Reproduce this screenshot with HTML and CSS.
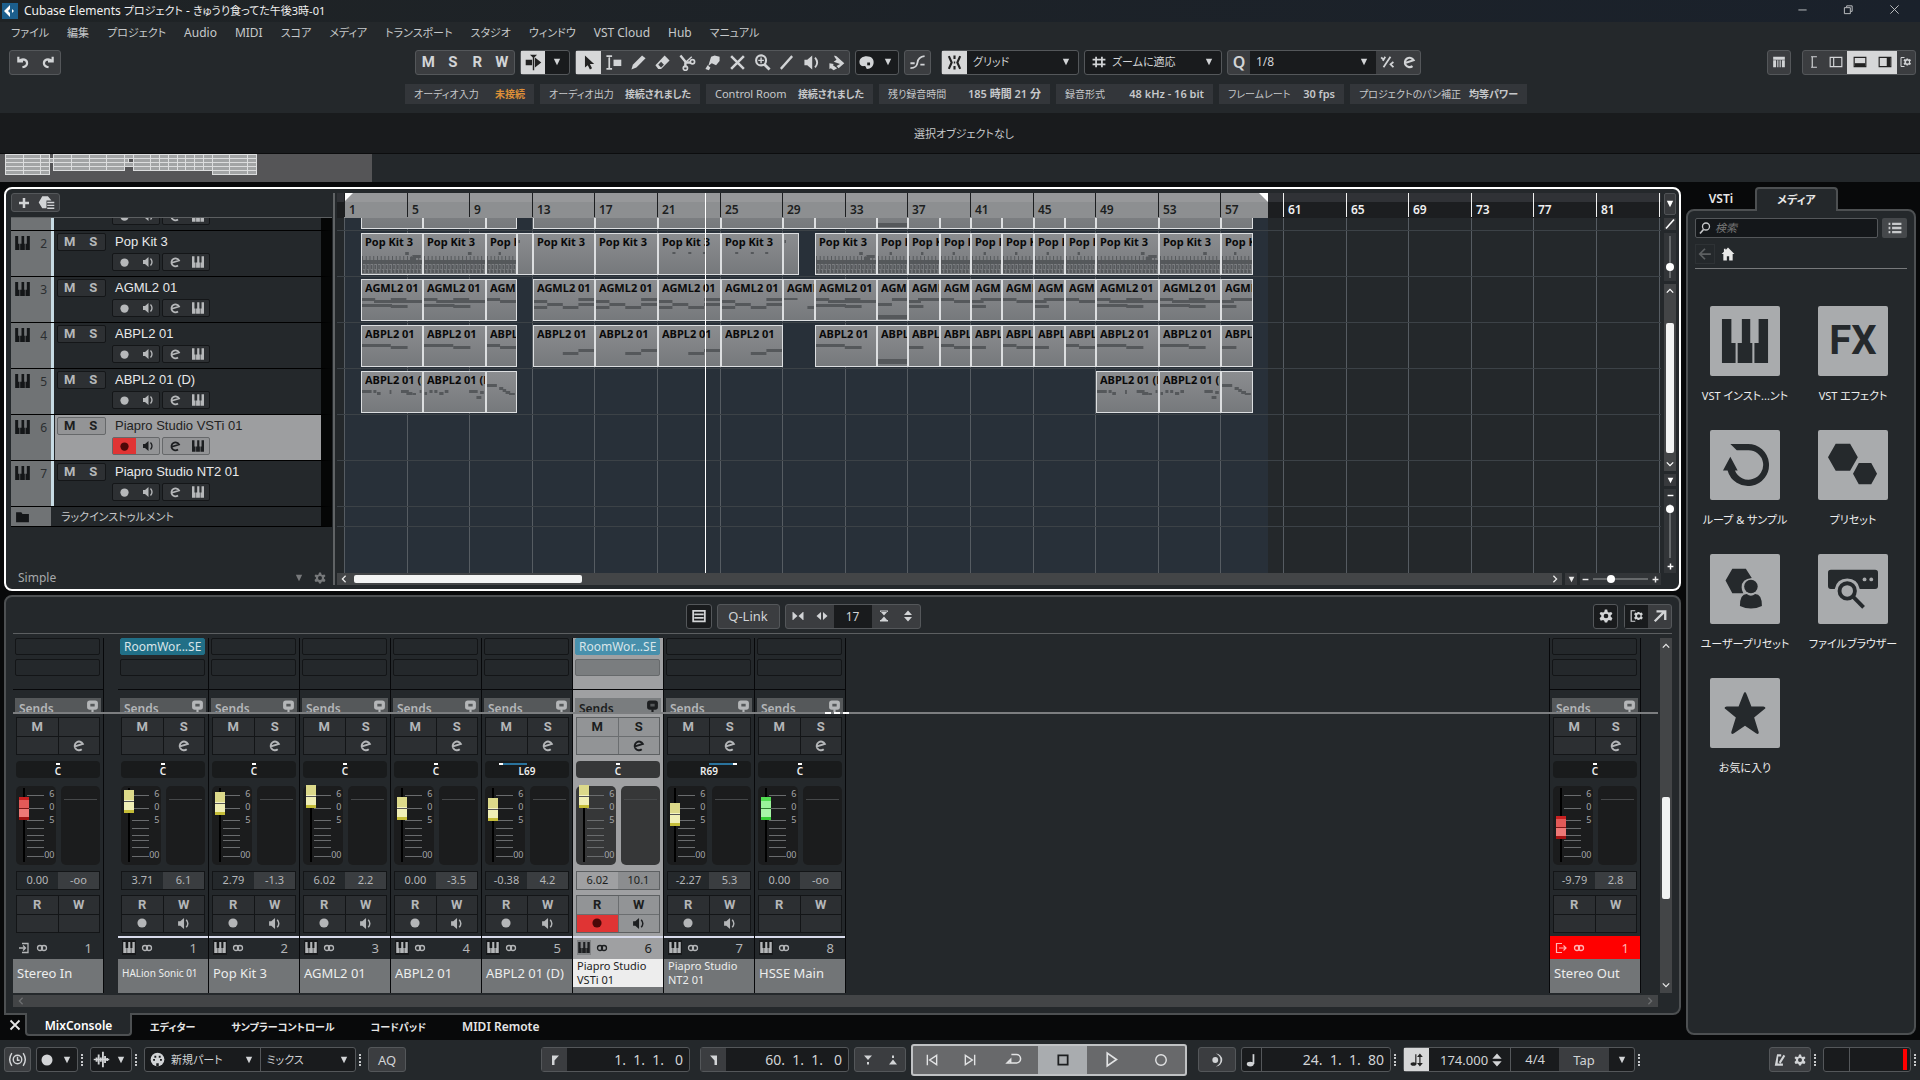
FILE: index.html
```html
<!DOCTYPE html>
<html lang="ja">
<head>
  <meta charset="UTF-8">
  <meta name="viewport" content="width=device-width, initial-scale=1.0">
  <title>Cubase Elements プロジェクト</title>
  <link rel="stylesheet" href="styles.css">
</head>
<body>

  <!-- icon sprite -->
  <svg class="sprite" aria-hidden="true">
    <symbol id="i-undo" viewBox="0 0 24 24"><path d="M4 3v8h8M5 10c7-5 14-2 14 4 0 4-3 6-8 7" fill="none" stroke="currentColor" stroke-width="3.800"/></symbol>
    <symbol id="i-redo" viewBox="0 0 24 24"><path d="M20 3v8h-8M19 10c-7-5-14-2-14 4 0 4 3 6 8 7" fill="none" stroke="currentColor" stroke-width="3.800"/></symbol>
    <symbol id="i-down" viewBox="0 0 10 10"><path d="M1 1h8L5 9z"/></symbol>
    <symbol id="i-autoscroll" viewBox="0 0 24 24"><path d="M1 8h9v8H1zM14 5l9 7-9 7zM7 1h10l-5 5zM11 3h2v20h-2z"/></symbol>
    <symbol id="i-arrow" viewBox="0 0 24 24"><path d="M7 2v17l4-3 3 6 3-2-3-6h6z"/></symbol>
    <symbol id="i-range" viewBox="0 0 24 24"><path d="M2 3h3l1 1 1-1h3M6 3v18M2 21h3l1-1 1 1h3" fill="none" stroke="currentColor" stroke-width="2.400"/><path d="M12 8h11v9H12z"/></symbol>
    <symbol id="i-pencil" viewBox="0 0 24 24"><path d="M2 22l2-7L17 2l5 4L9 19z"/></symbol>
    <symbol id="i-eraser" viewBox="0 0 24 24"><path d="M2 16L15 2l7 7L10 21H6z"/><path d="M6 15l4 4 4-4-4-4z" fill="#3b3d40"/></symbol>
    <symbol id="i-scissors" viewBox="0 0 24 24"><path d="M2 2l8 10M10 12h7M9 12v7" fill="none" stroke="currentColor" stroke-width="3.400"/><circle cx="19" cy="11" r="3" fill="none" stroke="currentColor" stroke-width="2.400"/><circle cx="9" cy="20" r="3" fill="none" stroke="currentColor" stroke-width="2.400"/><path d="M9 12l9-8" stroke="currentColor" stroke-width="2"/></symbol>
    <symbol id="i-glue" viewBox="0 0 24 24"><path d="M10 4l5-2 7 2v6l-5 6-6-3-5 4zM2 21l3-5 4 3-2 4z"/></symbol>
    <symbol id="i-cross" viewBox="0 0 24 24"><path d="M3 3l18 18M21 3L3 21" stroke="currentColor" stroke-width="3.600"/></symbol>
    <symbol id="i-zoom" viewBox="0 0 24 24"><circle cx="10" cy="9" r="7" fill="none" stroke="currentColor" stroke-width="3"/><path d="M6 9h8M10 5v8" stroke="currentColor" stroke-width="2"/><path d="M14 14l8 8" stroke="currentColor" stroke-width="4"/></symbol>
    <symbol id="i-line" viewBox="0 0 24 24"><path d="M4 21L20 3" stroke="currentColor" stroke-width="3.200"/></symbol>
    <symbol id="i-speaker" viewBox="0 0 24 24"><path d="M2 8h4l7-6v20l-7-6H2z"/><path d="M17 5q6 7 0 14" fill="none" stroke="currentColor" stroke-width="2.600"/></symbol>
    <symbol id="i-paint" viewBox="0 0 24 24"><path d="M9 2l3 1 11 10-8 7-3-3 5-3-9-3 4-3-3-4zM2 13l6 1-1 2 6 4-5 3-4-3-2 1z"/></symbol>
    <symbol id="i-palette" viewBox="0 0 24 24"><path d="M12 3c7 0 11 4 10 10s-6 8-9 8c-2 0-1-4-4-4-5 1-7-2-7-6 0-5 5-8 10-8z"/><path d="M13 12h4v4h-4z" fill="#191b1d"/></symbol>
    <symbol id="i-curve" viewBox="0 0 24 24"><path d="M2 20q9 0 10-8t10-9M2 13h6M16 15h6" fill="none" stroke="currentColor" stroke-width="2.600"/></symbol>
    <symbol id="i-snap" viewBox="0 0 24 24"><path d="M12 2v5M12 17v5M4 3l4 9-4 9M20 3l-4 9 4 9M11 12h2" fill="none" stroke="currentColor" stroke-width="3"/></symbol>
    <symbol id="i-grid" viewBox="0 0 24 24"><path d="M7 3v18M17 3v18M1 8h22M1 16h22" stroke="currentColor" stroke-width="3"/></symbol>
    <symbol id="i-tuplet" viewBox="0 0 24 24"><path d="M18 3L6 21M2 4l4 4M9 3L5 10M23 12l-5 4 5 5" fill="none" stroke="currentColor" stroke-width="3"/></symbol>
    <symbol id="i-edit" viewBox="0 0 24 24"><path d="M4 14L20 9A8 8 0 1 0 18 19" fill="none" stroke="currentColor" stroke-width="3.600"/></symbol>
    <symbol id="i-keys" viewBox="0 0 44 42"><path d="M0 0h9v23h4v19H0zM19 0h8v23h2v19H15V23h4zM35 0h9v42H31V23h4z"/></symbol>
    <symbol id="i-kbd" viewBox="0 0 24 24"><path d="M2 3h20v5H2zM2 9h5v12H2zM9 9h2v12H9zM13 9h2v12h-2zM17 9h5v12h-5z"/></symbol>
    <symbol id="i-zone-l" viewBox="0 0 24 24"><path d="M7 3h10M7 21h10M9 3v18" fill="none" stroke="currentColor" stroke-width="2"/></symbol>
    <symbol id="i-zone-left" viewBox="0 0 24 24"><path d="M2 4h20v16H2zM8 4v16" fill="none" stroke="currentColor" stroke-width="2"/></symbol>
    <symbol id="i-zone-low" viewBox="0 0 24 24"><path d="M2 4h20v16H2z" fill="none" stroke="currentColor" stroke-width="2"/><path d="M3 14h18v5H3z"/></symbol>
    <symbol id="i-zone-right" viewBox="0 0 24 24"><path d="M2 4h20v16H2z" fill="none" stroke="currentColor" stroke-width="2"/><path d="M15 5h6v14h-6z"/></symbol>
    <symbol id="i-gear" viewBox="0 0 24 24"><path fill-rule="evenodd" d="M10 1h4l1 4 2 1 4-1 2 3-3 3v2l3 3-2 4-4-1-2 1-1 3h-4l-1-3-2-1-4 1-2-4 3-3v-2L1 8l2-3 4 1 2-1zM12 8a4 4 0 1 0 0 8 4 4 0 0 0 0-8z"/></symbol>
    <symbol id="i-setup" viewBox="0 0 24 24"><path d="M9 3H2v18h7" fill="none" stroke="currentColor" stroke-width="2"/><path fill-rule="evenodd" d="M13 5h3l1 2 3-1 2 3-2 2v2l2 2-2 3-3-1-1 2h-3l-1-2-3 1-2-3 2-2v-2L7 9l2-3 3 1zM15 9a3 3 0 1 0 0 6 3 3 0 0 0 0-6z"/></symbol>
    <symbol id="i-plus" viewBox="0 0 24 24"><path d="M12 2v20M2 12h20" stroke="currentColor" stroke-width="5"/></symbol>
    <symbol id="i-minus" viewBox="0 0 24 24"><path d="M2 12h20" stroke="currentColor" stroke-width="5"/></symbol>
    <symbol id="i-preset" viewBox="0 0 24 24"><path d="M6 3h8l5 6h-7v11H6l-5-8z"/><path d="M13 12h10M13 16h10M13 20h10" stroke="currentColor" stroke-width="2"/></symbol>
    <symbol id="i-folder" viewBox="0 0 24 24"><path d="M1 4h9l2 3h11v14H1z"/></symbol>
    <symbol id="i-dot" viewBox="0 0 24 24"><circle cx="12" cy="12" r="11"/></symbol>
    <symbol id="i-ring" viewBox="0 0 24 24"><circle cx="12" cy="12" r="9" fill="none" stroke="currentColor" stroke-width="2.400"/></symbol>
    <symbol id="i-left" viewBox="0 0 10 10"><path d="M7 1L3 5l4 4" fill="none" stroke="currentColor" stroke-width="1.600"/></symbol>
    <symbol id="i-right" viewBox="0 0 10 10"><path d="M3 1l4 4-4 4" fill="none" stroke="currentColor" stroke-width="1.600"/></symbol>
    <symbol id="i-up" viewBox="0 0 10 10"><path d="M1 7l4-4 4 4" fill="none" stroke="currentColor" stroke-width="1.600"/></symbol>
    <symbol id="i-dn" viewBox="0 0 10 10"><path d="M1 3l4 4 4-4" fill="none" stroke="currentColor" stroke-width="1.600"/></symbol>
    <symbol id="i-rack" viewBox="0 0 24 24"><path d="M2 3h20v18H2zM4 9h16M4 15h16" fill="none" stroke="currentColor" stroke-width="3"/></symbol>
    <symbol id="i-narrow" viewBox="0 0 24 24"><path d="M1 4h2v16H1zM21 4h2v16h-2zM3 5l8 7-8 7zM21 5l-8 7 8 7z"/></symbol>
    <symbol id="i-wide" viewBox="0 0 24 24"><path d="M10 4v16l-9-8zM14 4v16l9-8z"/></symbol>
    <symbol id="i-short" viewBox="0 0 24 24"><path d="M4 1h16v3H4zM4 20h16v3H4zM5 3l7 8 7-8zM5 21l7-8 7 8z"/></symbol>
    <symbol id="i-tall" viewBox="0 0 24 24"><path d="M4 10h16l-8-9zM4 14h16l-8 9z"/></symbol>
    <symbol id="i-open" viewBox="0 0 24 24"><path d="M3 21L20 4M6 4h15v15" fill="none" stroke="currentColor" stroke-width="4"/></symbol>
    <symbol id="i-send" viewBox="0 0 24 24"><rect x="2" y="1" width="20" height="17" rx="5"/><path d="M10 17h4v7h-4z"/><rect x="8" y="7" width="8" height="5" fill="#55585a"/></symbol>
    <symbol id="i-stereo" viewBox="0 0 24 24"><circle cx="8" cy="12" r="5" fill="none" stroke="currentColor" stroke-width="2.600"/><circle cx="16" cy="12" r="5" fill="none" stroke="currentColor" stroke-width="2.600"/></symbol>
    <symbol id="i-in" viewBox="0 0 24 24"><path d="M8 3h12v18H8M2 12h12M10 7l5 5-5 5" fill="none" stroke="currentColor" stroke-width="2.600"/></symbol>
    <symbol id="i-out" viewBox="0 0 24 24"><path d="M14 3H3v18h11M8 12h13M17 7l5 5-5 5" fill="none" stroke="currentColor" stroke-width="2.400"/></symbol>
    <symbol id="i-search" viewBox="0 0 24 24"><circle cx="14" cy="9" r="7" fill="none" stroke="currentColor" stroke-width="2.600"/><path d="M9 15l-7 8" stroke="currentColor" stroke-width="3.400"/></symbol>
    <symbol id="i-list" viewBox="0 0 24 24"><path d="M1 5h3M7 5h16M1 12h3M7 12h16M1 19h3M7 19h16" stroke="currentColor" stroke-width="4"/></symbol>
    <symbol id="i-back" viewBox="0 0 24 24"><path d="M22 12H4M12 3l-9 9 9 9" fill="none" stroke="currentColor" stroke-width="3"/></symbol>
    <symbol id="i-home" viewBox="0 0 24 24"><path d="M12 1l11 11h-3v11h-6v-7h-4v7H4V12H1L5 8V3h3v2z"/></symbol>
    <symbol id="i-loop" viewBox="0 0 48 48"><path d="M8 1h19a23 23 0 1 1-22 29H0l8-15 8 15h-3a16 16 0 1 0 14-22H15z"/></symbol>
    <symbol id="i-hexes" viewBox="0 0 52 44"><path d="M8 0h15l8 14-8 14H8L0 14zM32 20h13l6 11-6 11H32l-6-11z"/></symbol>
    <symbol id="i-userhex" viewBox="0 0 46 52"><path d="M8 2h16l7 11q-12 1-12 11 0 4 2 7H8L0 16z"/><circle cx="30" cy="23" r="8"/><path d="M17 46q0-14 8-14 5 4 10 0 8 0 8 14-13 6-26 0z"/></symbol>
    <symbol id="i-browser" viewBox="0 0 52 44"><path d="M3 2h46q3 0 3 3v14q0 3-3 3H33q-2-11-13-11T7 22H3q-3 0-3-3V5q0-3 3-3z"/><circle cx="38" cy="12" r="2" fill="#a9abad"/><circle cx="45" cy="12" r="2" fill="#a9abad"/><circle cx="20" cy="24" r="8" fill="none" stroke="currentColor" stroke-width="4"/><path d="M26 30l11 11" stroke="currentColor" stroke-width="4"/></symbol>
    <symbol id="i-star" viewBox="0 0 48 48"><path d="M24 1q1 0 2 3l5 13h13q4 1 1 3L34 29l5 16q0 3-3 1l-12-8-12 8q-3 2-3-1l5-16L3 20q-3-2 1-3h13l5-13q1-3 2-3z"/></symbol>
    <symbol id="i-clock" viewBox="0 0 24 24"><circle cx="12" cy="12" r="6" fill="none" stroke="currentColor" stroke-width="2"/><path d="M12 8v5h3M4 3q-6 9 0 18M20 3q6 9 0 18" fill="none" stroke="currentColor" stroke-width="2"/></symbol>
    <symbol id="i-wave" viewBox="0 0 24 24"><path d="M1 12h22" stroke="currentColor" stroke-width="2"/><path d="M5 9v6M8 5v14M11 9v6M14 1v22M17 7v10M20 10v4" stroke="currentColor" stroke-width="2.600"/></symbol>
    <symbol id="i-midi" viewBox="0 0 24 24"><circle cx="12" cy="12" r="11"/><path d="M5 11h3v3H5zM7 6h3v3H7zM14 6h3v3h-3zM16 11h3v3h-3zM10 18h4v5h-4z" fill="#191b1d"/></symbol>
    <symbol id="i-loc-l" viewBox="0 0 24 24"><path d="M6 3h14L11 13v9H6z"/></symbol>
    <symbol id="i-loc-r" viewBox="0 0 24 24"><path d="M18 3H4l9 10v9h5z"/></symbol>
    <symbol id="i-punch-in" viewBox="0 0 24 24"><path d="M4 3h16l-8 9zM10 16h4v5h-4z"/></symbol>
    <symbol id="i-punch-out" viewBox="0 0 24 24"><path d="M4 21h16l-8-10zM10 3h4v5h-4z"/></symbol>
    <symbol id="i-to-start" viewBox="0 0 24 24"><path d="M4 3v18M20 4v16L8 12z" fill="none" stroke="currentColor" stroke-width="2.400"/></symbol>
    <symbol id="i-to-end" viewBox="0 0 24 24"><path d="M20 3v18M4 4v16l12-8z" fill="none" stroke="currentColor" stroke-width="2.400"/></symbol>
    <symbol id="i-cycle" viewBox="0 0 24 24"><path d="M9 5h7a6 6 0 0 1 0 12H3l5-5v5" fill="none" stroke="currentColor" stroke-width="2.200"/></symbol>
    <symbol id="i-stop" viewBox="0 0 24 24"><path d="M4 4h16v16H4z" fill="none" stroke="currentColor" stroke-width="3"/></symbol>
    <symbol id="i-play" viewBox="0 0 24 24"><path d="M6 3v18l13-9z" fill="none" stroke="currentColor" stroke-width="2.400"/></symbol>
    <symbol id="i-jog" viewBox="0 0 24 24"><circle cx="9" cy="12" r="5"/><path d="M10 1a11 11 0 1 1 0 22q8-4 8-11T10 1z"/></symbol>
    <symbol id="i-note" viewBox="0 0 24 24"><ellipse cx="9" cy="19" rx="6" ry="4"/><path d="M13 2h3v17h-3z"/></symbol>
    <symbol id="i-tempo" viewBox="0 0 24 24"><ellipse cx="6" cy="19" rx="5" ry="3"/><path d="M9 2h2v17H9z"/><path d="M17 1l5 6h-4v10h4l-5 6-5-6h4V7h-4z"/></symbol>
    <symbol id="i-metro" viewBox="0 0 24 24"><path d="M7 2h7v4H9L8 18h9v4H3zM10 16L18 3l3 2-8 13z"/></symbol>
    <symbol id="i-min" viewBox="0 0 24 24"><path d="M3 13h18" stroke="currentColor" stroke-width="2"/></symbol>
    <symbol id="i-max" viewBox="0 0 24 24"><path d="M3 8h13v13H3zM8 7V4h12v12h-3" fill="none" stroke="currentColor" stroke-width="2"/></symbol>
    <symbol id="i-close" viewBox="0 0 24 24"><path d="M3 3l18 18M21 3L3 21" stroke="currentColor" stroke-width="2"/></symbol>
  </svg>

  <header class="titlebar">
    <svg class="app-logo" viewBox="0 0 16 16"><rect width="16" height="16" fill="#1c5f8d"/><path d="M8 2L2 8l6 6v-4L6 8l2-2z" fill="#fff"/><path d="M10 6l2 2-2 2z" fill="#fff"/></svg>
    <h1>Cubase Elements <span class="ja">プロジェクト</span> - <span class="ja">きゅうり食ってた午後3時-01</span></h1>
    <div class="window-buttons">
      <button aria-label="最小化"><svg class="icon"><use href="#i-min"/></svg></button>
      <button aria-label="元に戻す"><svg class="icon"><use href="#i-max"/></svg></button>
      <button aria-label="閉じる"><svg class="icon"><use href="#i-close"/></svg></button>
    </div>
  </header>

  <nav class="menubar">
    <button class="ja">ファイル</button>
    <button class="ja">編集</button>
    <button class="ja">プロジェクト</button>
    <button>Audio</button>
    <button>MIDI</button>
    <button class="ja">スコア</button>
    <button class="ja">メディア</button>
    <button class="ja">トランスポート</button>
    <button class="ja">スタジオ</button>
    <button class="ja">ウィンドウ</button>
    <button>VST Cloud</button>
    <button>Hub</button>
    <button class="ja">マニュアル</button>
  </nav>

  <div class="toolbar">
    <div class="group">
      <button aria-label="元に戻す"><svg class="icon"><use href="#i-undo"/></svg></button>
      <button aria-label="やり直し"><svg class="icon"><use href="#i-redo"/></svg></button>
    </div>

    <div class="toolbar-main">
      <div class="group letters">
        <button>M</button><button>S</button><button>R</button><button>W</button>
      </div>
      <div class="group dark autoscroll">
        <button class="on" aria-label="オートスクロール"><svg class="icon big"><use href="#i-autoscroll"/></svg></button>
        <button aria-label="オートスクロール設定"><svg class="icon tiny"><use href="#i-down"/></svg></button>
      </div>
      <div class="group tools" id="tools"></div>
      <div class="group dark palette">
        <button aria-label="カラー"><svg class="icon big"><use href="#i-palette"/></svg></button>
        <button aria-label="カラーメニュー"><svg class="icon tiny"><use href="#i-down"/></svg></button>
      </div>
      <div class="group">
        <button aria-label="ゼロクロス"><svg class="icon big"><use href="#i-curve"/></svg></button>
      </div>
      <div class="group dark snap">
        <button class="on" aria-label="スナップ"><svg class="icon big"><use href="#i-snap"/></svg></button>
        <label class="drop"><select class="ja" aria-label="スナップタイプ"><option>グリッド</option></select><svg class="icon tiny"><use href="#i-down"/></svg></label>
      </div>
      <div class="group dark gridtype">
        <svg class="icon"><use href="#i-grid"/></svg>
        <label class="drop"><select class="ja" aria-label="グリッドの種類"><option>ズームに適応</option></select><svg class="icon tiny"><use href="#i-down"/></svg></label>
      </div>
      <div class="group quantize">
        <button class="q">Q</button>
        <label class="drop"><select aria-label="クオンタイズ"><option>1/8</option></select><svg class="icon tiny"><use href="#i-down"/></svg></label>
        <button aria-label="ソフトクオンタイズ"><svg class="icon"><use href="#i-tuplet"/></svg></button>
        <button aria-label="クオンタイズパネル"><svg class="icon"><use href="#i-edit"/></svg></button>
      </div>
    </div>

    <div class="toolbar-right">
      <div class="group"><button aria-label="キーボード"><svg class="icon"><use href="#i-kbd"/></svg></button></div>
      <div class="group">
        <button aria-label="インスペクター"><svg class="icon"><use href="#i-zone-l"/></svg></button>
        <button aria-label="左ゾーン"><svg class="icon"><use href="#i-zone-left"/></svg></button>
        <button class="on" aria-label="下ゾーン"><svg class="icon"><use href="#i-zone-low"/></svg></button>
        <button class="on" aria-label="右ゾーン"><svg class="icon"><use href="#i-zone-right"/></svg></button>
        <button class="thin" aria-label="設定"><svg class="icon small"><use href="#i-setup"/></svg></button>
      </div>
    </div>
  </div>

  <div class="statusline">
    <div class="stat"><span class="ja">オーディオ入力</span><b class="ja warn">未接続</b></div>
    <div class="stat"><span class="ja">オーディオ出力</span><b class="ja">接続されました</b></div>
    <div class="stat"><span>Control Room</span><b class="ja">接続されました</b></div>
    <div class="stat"><span class="ja">残り録音時間</span><b>185 時間 21 分</b></div>
    <div class="stat"><span class="ja">録音形式</span><b>48 kHz - 16 bit</b></div>
    <div class="stat"><span class="ja">フレームレート</span><b>30 fps</b></div>
    <div class="stat"><span class="ja">プロジェクトのパン補正</span><b class="ja">均等パワー</b></div>
  </div>

  <div class="infoline ja">選択オブジェクトなし</div>

  <div class="overview"><div class="overview-view" id="overview"></div></div>

  <main class="workspace">
    <div class="left-side">

      <section class="project">
        <div class="tracks">
          <div class="tracks-head">
            <div class="group flat">
              <button aria-label="トラックを追加"><svg class="icon"><use href="#i-plus"/></svg></button>
              <button aria-label="プリセット"><svg class="icon big"><use href="#i-preset"/></svg></button>
            </div>
          </div>
          <div class="track-list" id="trackList"></div>
          <div class="tracks-foot">
            <span>Simple</span>
            <svg class="icon tiny"><use href="#i-down"/></svg>
            <svg class="icon small"><use href="#i-gear"/></svg>
          </div>
        </div>
        <div class="splitter"></div>
        <div class="timeline">
          <div class="ruler" id="ruler"></div>
          <div class="canvas" id="canvas"></div>
          <div class="hbar">
            <div class="hscroll"><svg class="icon tiny"><use href="#i-left"/></svg><div class="hscroll-track"><div class="hthumb"></div></div><svg class="icon tiny"><use href="#i-right"/></svg></div>
            <button class="mini" aria-label="ズームプリセット"><svg class="icon micro"><use href="#i-down"/></svg></button>
            <div class="hzoom"><svg class="icon micro"><use href="#i-minus"/></svg><input type="range" class="zoom" aria-label="横ズーム" value="30"><svg class="icon micro"><use href="#i-plus"/></svg></div>
          </div>
          <div class="playhead" id="playhead"></div>
        </div>
        <div class="vbar">
          <button class="mini tall" aria-label="ルーラー"><svg class="icon tiny"><use href="#i-down"/></svg></button>
          <button class="mini" aria-label="編集"><svg class="icon small"><use href="#i-line"/></svg></button>
          <div class="vbox"><input type="range" class="zoom vertical" aria-label="波形ズーム" value="22"></div>
          <div class="vbox vscroll"><svg class="icon tiny"><use href="#i-up"/></svg><div class="vthumb"></div><svg class="icon tiny"><use href="#i-dn"/></svg></div>
          <button class="mini" aria-label="縦ズームプリセット"><svg class="icon micro"><use href="#i-down"/></svg></button>
          <div class="vbox"><svg class="icon micro"><use href="#i-minus"/></svg><input type="range" class="zoom vertical long" aria-label="縦ズーム" value="98"><svg class="icon micro"><use href="#i-plus"/></svg></div>
        </div>
      </section>

      <section class="mixer">
        <div class="mixer-head">
          <div class="mixer-tools">
            <div class="group dark"><button aria-label="ラック"><svg class="icon"><use href="#i-rack"/></svg></button></div>
            <div class="group"><button class="qlink">Q-Link</button></div>
            <div class="group">
              <button aria-label="幅を狭く"><svg class="icon small"><use href="#i-narrow"/></svg></button>
              <button aria-label="幅を広く"><svg class="icon small"><use href="#i-wide"/></svg></button>
              <output class="count">17</output>
              <button aria-label="低く"><svg class="icon small"><use href="#i-short"/></svg></button>
              <button aria-label="高く"><svg class="icon small"><use href="#i-tall"/></svg></button>
            </div>
          </div>
          <div class="mixer-side">
            <div class="group dark"><button aria-label="機能メニュー"><svg class="icon"><use href="#i-gear"/></svg></button></div>
            <div class="group"><button class="deep" aria-label="ツールバー設定"><svg class="icon"><use href="#i-setup"/></svg></button><button aria-label="別ウィンドウ"><svg class="icon"><use href="#i-open"/></svg></button></div>
          </div>
        </div>
        <div class="mixer-body">
          <div class="console" id="console"></div>
          <div class="console-scroll"><svg class="icon tiny"><use href="#i-up"/></svg><div class="vthumb"></div><svg class="icon tiny"><use href="#i-dn"/></svg></div>
        </div>
        <div class="mixer-hscroll"><svg class="icon tiny"><use href="#i-left"/></svg><svg class="icon tiny"><use href="#i-right"/></svg></div>
      </section>

      <nav class="lower-tabs">
        <button class="tab-close" aria-label="閉じる"><svg class="icon small"><use href="#i-cross"/></svg></button>
        <button class="tab active">MixConsole</button>
        <button class="tab ja">エディター</button>
        <button class="tab ja">サンプラーコントロール</button>
        <button class="tab ja">コードパッド</button>
        <button class="tab">MIDI Remote</button>
      </nav>
    </div>

    <aside class="media">
      <div class="media-tabs">
        <button>VSTi</button>
        <button class="active ja">メディア</button>
      </div>
      <div class="media-panel">
        <div class="media-search">
          <label class="search"><svg class="icon"><use href="#i-search"/></svg><input type="text" class="ja" aria-label="検索" placeholder="検索"></label>
          <button aria-label="リスト表示"><svg class="icon"><use href="#i-list"/></svg></button>
        </div>
        <div class="media-nav">
          <button class="back" aria-label="戻る"><svg class="icon"><use href="#i-back"/></svg></button>
          <button aria-label="ホーム"><svg class="icon"><use href="#i-home"/></svg></button>
        </div>
        <div class="tiles">
          <button class="tile"><span class="tile-pic"><svg><use href="#i-keys"/></svg></span><span class="ja">VST インスト...ント</span></button>
          <button class="tile"><span class="tile-pic fx">FX</span><span class="ja">VST エフェクト</span></button>
          <button class="tile"><span class="tile-pic"><svg><use href="#i-loop"/></svg></span><span class="ja">ループ &amp; サンプル</span></button>
          <button class="tile"><span class="tile-pic"><svg><use href="#i-hexes"/></svg></span><span class="ja">プリセット</span></button>
          <button class="tile"><span class="tile-pic"><svg><use href="#i-userhex"/></svg></span><span class="ja">ユーザープリセット</span></button>
          <button class="tile"><span class="tile-pic"><svg><use href="#i-browser"/></svg></span><span class="ja">ファイルブラウザー</span></button>
          <button class="tile"><span class="tile-pic"><svg><use href="#i-star"/></svg></span><span class="ja">お気に入り</span></button>
        </div>
      </div>
    </aside>
  </main>

  <footer class="transport">
    <div class="t-group">
      <div class="group"><button aria-label="オーディオパフォーマンス"><svg class="icon big"><use href="#i-clock"/></svg></button></div>
      <div class="group dark dots"><button class="thin" aria-label="録音モード"><svg class="icon small"><use href="#i-dot"/></svg></button><button class="thin" aria-label="録音モードメニュー"><svg class="icon tiny"><use href="#i-down"/></svg></button></div>
      <div class="group dark dots"><button class="thin" aria-label="オーディオ録音"><svg class="icon big"><use href="#i-wave"/></svg></button><button class="thin" aria-label="オーディオ録音メニュー"><svg class="icon tiny"><use href="#i-down"/></svg></button></div>
      <div class="group dark dots midirec">
        <svg class="icon"><use href="#i-midi"/></svg>
        <label class="drop"><select class="ja" aria-label="MIDI 録音モード"><option>新規パート</option></select><svg class="icon tiny"><use href="#i-down"/></svg></label>
        <label class="drop"><select class="ja" aria-label="MIDI サイクル録音"><option>ミックス</option></select><svg class="icon tiny"><use href="#i-down"/></svg></label>
      </div>
      <div class="group"><button class="aq">AQ</button></div>
    </div>

    <div class="t-group center">
      <div class="group dark locator first"><button class="lit" aria-label="左ロケーター"><svg class="icon small"><use href="#i-loc-l"/></svg></button><output>1.&nbsp; 1.&nbsp; 1.&nbsp;&nbsp; 0</output></div>
      <div class="group dark locator"><button class="lit" aria-label="右ロケーター"><svg class="icon small"><use href="#i-loc-r"/></svg></button><output>60.&nbsp; 1.&nbsp; 1.&nbsp;&nbsp; 0</output></div>
      <div class="group"><button aria-label="パンチイン"><svg class="icon small"><use href="#i-punch-in"/></svg></button><button aria-label="パンチアウト"><svg class="icon small"><use href="#i-punch-out"/></svg></button></div>
      <div class="play-controls">
        <button aria-label="先頭へ"><svg class="icon"><use href="#i-to-start"/></svg></button>
        <button aria-label="末尾へ"><svg class="icon"><use href="#i-to-end"/></svg></button>
        <button aria-label="サイクル"><svg class="icon big"><use href="#i-cycle"/></svg></button>
        <button class="current" aria-label="停止"><svg class="icon"><use href="#i-stop"/></svg></button>
        <button aria-label="再生"><svg class="icon big"><use href="#i-play"/></svg></button>
        <button aria-label="録音"><svg class="icon"><use href="#i-ring"/></svg></button>
      </div>
      <div class="group jog"><button aria-label="ジョグ"><svg class="icon"><use href="#i-jog"/></svg></button></div>
      <div class="group dark dots position"><button class="thin" aria-label="表示形式"><svg class="icon"><use href="#i-note"/></svg></button><output>24.&nbsp; 1.&nbsp; 1.&nbsp; 80</output></div>
      <div class="group dark dots tempo">
        <button class="on" aria-label="テンポトラック"><svg class="icon"><use href="#i-tempo"/></svg></button>
        <output>174.000</output><svg class="icon"><use href="#i-tall"/></svg>
        <output class="sign">4/4</output>
        <button class="tap">Tap</button>
        <button aria-label="テンポメニュー"><svg class="icon tiny"><use href="#i-down"/></svg></button>
      </div>
    </div>

    <div class="t-group">
      <div class="group dots"><button class="thin" aria-label="メトロノーム"><svg class="icon"><use href="#i-metro"/></svg></button><button class="thin" aria-label="メトロノーム設定"><svg class="icon small"><use href="#i-gear"/></svg></button></div>
      <div class="group dark dots level"><span class="level-in"></span><span class="level-clip"></span></div>
    </div>
  </footer>

  <script src="script.js"></script>
</body>
</html>
```

FILE: styles.css
```css
* {
  box-sizing: border-box;
  margin: 0;
  padding: 0;
}

body {
  display: flex;
  flex-direction: column;
  height: 100vh;
  overflow: hidden;
  background-color: #24282b;
  color: #c6c8ca;
  font-family: "Noto Sans", "Noto Sans CJK JP", sans-serif;
  font-size: 12px;
  line-height: 16px;
}

button,
select,
input {
  font: inherit;
  color: inherit;
  background: none;
  border: none;
  outline: none;
}

.ja {
  font-family: "Noto Sans", "Noto Sans CJK JP", sans-serif;
  font-size: 11px;
  font-feature-settings: "palt";
}

.sprite {
  position: absolute;
  width: 0;
  height: 0;
}

.icon {
  width: 14px;
  height: 14px;
  flex: none;
  fill: currentColor;
}

.icon.big { width: 17px; height: 17px; }
.icon.small { width: 12px; height: 12px; }
.icon.tiny { width: 8px; height: 8px; }
.icon.micro { width: 7px; height: 7px; }

/* title and menu */
.titlebar {
  display: flex;
  align-items: center;
  height: 22px;
  padding: 0 3px 0 2px;
  gap: 6px;
  background: linear-gradient(90deg, #1f2325, #1a212b);
}

.app-logo { width: 16px; height: 16px; }

.titlebar h1 {
  flex: 1;
  font-size: 12px;
  font-weight: 400;
  color: #f0f0f0;
}

.window-buttons { display: flex; }

.window-buttons button {
  width: 46px;
  height: 22px;
}

.window-buttons .icon { width: 11px; height: 11px; }

.menubar {
  display: flex;
  align-items: center;
  height: 22px;
  padding-left: 11px;
  gap: 18px;
}

/* toolbar */
.toolbar {
  display: flex;
  justify-content: space-between;
  align-items: center;
  height: 38px;
  padding: 0 4px 2px 9px;
}

.toolbar-main,
.toolbar-right {
  display: flex;
  gap: 5px;
}

.toolbar-main { padding-left: 8px; }

.toolbar-right { gap: 11px; }

.group {
  display: flex;
  align-items: center;
  height: 25px;
  border: 1px solid #54575a;
  border-radius: 3px;
  background-color: #3b3d40;
  color: #d2d4d6;
}

.group.dark { background-color: #191b1d; }

.group button {
  display: flex;
  align-items: center;
  justify-content: center;
  min-width: 25px;
  height: 23px;
}

.group button.thin { min-width: 20px; }

.group button.on {
  background-color: #d6d7d8;
  color: #222;
}

.toolbar-right .group button { min-width: 22px; }
.toolbar-right .group button.on { min-width: 25px; }
.toolbar-right .group button.thin { min-width: 18px; }

.letters,
.autoscroll,
.tools {
  display: grid;
  grid-auto-flow: column;
  grid-auto-columns: 1fr;
}

.letters {
  width: 100px;
  font-family: Roboto, sans-serif;
  font-size: 15px;
  font-weight: 700;
}

.autoscroll { width: 50px; }
.tools { width: 275px; }

.letters button,
.autoscroll button,
.tools button { min-width: 0; }

.palette button { min-width: 21px; }
.snap { width: 138px; margin-left: 5px; }
.gridtype { width: 138px; padding-left: 7px; }
.quantize { width: 194px; }

.quantize .q {
  font-size: 16px;
  font-weight: 600;
}

.quantize .drop {
  height: 23px;
  background-color: #191b1d;
}

.quantize button { min-width: 22px; }

.drop {
  display: flex;
  flex: 1;
  align-items: center;
  min-width: 0;
  padding: 0 8px 0 6px;
}

.drop select {
  flex: 1;
  min-width: 0;
  height: 20px;
  appearance: none;
}

.drop select.ja { font-size: 11px; }

/* status line */
.statusline {
  display: grid;
  grid-template-columns: 129px 160px 167px 171px 157px 125px 177px;
  gap: 6px;
  justify-content: center;
  padding: 2px 0 9px 12px;
  font-size: 11px;
}

.stat {
  display: flex;
  justify-content: space-between;
  align-items: center;
  height: 20px;
  padding: 0 9px;
  background-color: #33363a;
  white-space: nowrap;
}

.stat .ja { font-size: 10px; }
.stat b { font-weight: 600; }
.stat b.warn { color: #dd8f38; }

.infoline {
  display: flex;
  align-items: center;
  justify-content: center;
  height: 41px;
  padding: 2px 0 0 8px;
  background-color: #191b1d;
  border-bottom: 1px solid #0c0d0e;
}

.overview {
  height: 28px;
}

.overview-view {
  position: relative;
  width: 372px;
  height: 28px;
  background-color: #555557;
}

.overview-part {
  position: absolute;
  height: 5px;
  background-color: #a2a4a5;
  border: 1px solid #dcddde;
}

/* workspace */
.workspace {
  display: flex;
  flex: 1;
  min-height: 0;
  padding: 5px 4px 0 4px;
  gap: 5px;
  background-color: #08090a;
}

.left-side {
  display: flex;
  flex: 1;
  flex-direction: column;
  min-width: 0;
}

.project {
  display: flex;
  flex: 1;
  min-height: 0;
  margin-bottom: 4px;
  padding: 4px 3px 4px 5px;
  border: 2px solid #fff;
  border-radius: 8px;
  background-color: #24282b;
}

.tracks {
  display: flex;
  flex-direction: column;
  width: 321px;
}

.tracks-head {
  height: 25px;
  border-bottom: 1px solid #5c5f61;
}

.group.flat {
  width: 49px;
  height: 19px;
}

.group.flat button {
  height: 17px;
  min-width: 23px;
}

.group.flat .icon { width: 12px; }
.group.flat .icon.big { width: 17px; }

.track {
  display: flex;
  height: 46px;
  border-bottom: 1px solid #000;
  border-right: 11px solid #050606;
}

.track.cut {
  height: 13px;
  align-items: flex-end;
  overflow: hidden;
}

.track-no {
  display: flex;
  justify-content: space-between;
  width: 40px;
  height: 45px;
  padding: 5px 4px;
  background-color: #707375;
  color: #2b2e30;
}

.track-no .icon {
  width: 15px;
  height: 14px;
  color: #141618;
}

.track-color {
  width: 3px;
  height: 45px;
  margin-right: 1px;
  background-color: #c7dbe4;
}

.track-body {
  display: grid;
  flex: 1;
  grid-template-columns: 49px 1fr;
  grid-template-rows: 18px 18px;
  gap: 2px 6px;
  height: 45px;
  padding: 2px 0 0 2px;
  font-family: "Liberation Sans", sans-serif;
  color: #e8e9ea;
}

.track-name {
  padding-left: 3px;
  font-size: 13px;
  line-height: 17px;
}

.pads {
  display: flex;
  grid-column: 2;
  gap: 2px;
}

.pad {
  display: flex;
  height: 18px;
  border: 1px solid #141618;
  border-radius: 2px;
  background-color: #2d3033;
  color: #b6b8ba;
}

.pad button {
  display: flex;
  flex: 1;
  align-items: center;
  justify-content: center;
  min-width: 23px;
  font-family: Roboto, sans-serif;
  font-size: 13px;
  font-weight: 700;
}

.pad .icon { width: 12px; height: 12px; }
.pad .icon.rec { width: 9px; height: 9px; }

.track.selected .track-body {
  background-color: #9d9ea0;
  color: #222;
}

.track.selected .pad {
  background-color: #939496;
  border-color: #66686a;
  color: #1c1e20;
}

.track.selected .armed {
  background-color: #e03434;
  color: #4c0808;
}

.track.folder { height: 20px; }

.track.folder .track-no {
  height: 19px;
  padding: 3px 4px;
}

.track.folder .ja { padding-left: 10px; line-height: 20px; }

.tracks-foot {
  display: flex;
  align-items: center;
  gap: 11px;
  margin-top: auto;
  padding: 0 6px 0 7px;
  height: 14px;
  color: #a6a8aa;
}

.tracks-foot span { flex: 1; }
.tracks-foot .icon { color: #77797b; }

.splitter {
  width: 2px;
  margin: 0 2px 0 1px;
  background-color: #606365;
}

/* timeline */
.timeline {
  position: relative;
  display: flex;
  flex: 1;
  flex-direction: column;
  min-width: 0;
  overflow: hidden;
}

.ruler {
  position: relative;
  height: 25px;
  background: linear-gradient(#303236 36%, #1c1e20 36%);
}

.ruler-range,
.canvas-range {
  position: absolute;
  top: 0;
  bottom: 0;
}

.ruler-range {
  background: linear-gradient(#97989a 36%, #8d8f91 36%);
}

.ruler-range::before,
.ruler-range::after {
  content: "";
  position: absolute;
  top: 0;
  border-top: 9px solid #fff;
}

.ruler-range::before { left: 0; border-right: 9px solid transparent; }
.ruler-range::after { right: 0; border-left: 9px solid transparent; }

.tick {
  position: absolute;
  top: 0;
  height: 24px;
  padding: 9px 0 0 4px;
  border-left: 1px solid #f0f0f0;
  color: #f0f0f0;
  font-size: 12px;
  font-weight: 600;
  line-height: 15px;
}

.tick.inside {
  border-color: #1c1e20;
  color: #1c1e20;
}

.canvas {
  position: relative;
  flex: 1;
  overflow: hidden;
}

.canvas-range { background-color: #283039; }

.beat {
  position: absolute;
  top: 0;
  bottom: 0;
  width: 1px;
  background-color: #565c62;
}

.row-line {
  position: absolute;
  left: 0;
  right: 0;
  height: 1px;
  background-color: #3c4247;
}

.clip {
  position: absolute;
  height: 42px;
  overflow: hidden;
  border: 1px solid #dcdee0;
  background: linear-gradient(#8b8d90, #76797c);
  color: #0a0a0a;
  font-size: 11px;
  font-weight: 700;
  line-height: 16px;
  white-space: nowrap;
}

.clip svg {
  position: absolute;
  left: 0;
  top: 0;
  width: 100%;
  height: 40px;
  fill: #55585b;
}

.clip span {
  position: relative;
  display: block;
  margin-left: 3px;
  overflow: hidden;
}

.playhead {
  position: absolute;
  top: 0;
  bottom: 12px;
  width: 1px;
  background-color: #fff;
}

.hbar {
  display: flex;
  gap: 3px;
  height: 12px;
  color: #e8e8e8;
}

.hscroll {
  display: flex;
  flex: 1;
  align-items: center;
  padding: 0 3px;
  background-color: #434547;
}

.hscroll-track {
  flex: 1;
  padding-left: 6px;
}

.hthumb {
  width: 228px;
  height: 8px;
  border-radius: 2px;
  background-color: #f2f3f3;
}

.hzoom {
  display: flex;
  align-items: center;
  gap: 4px;
  width: 81px;
  padding: 0 2px;
  background-color: #323538;
}

.mini {
  display: flex;
  align-items: center;
  justify-content: center;
  width: 12px;
  height: 12px;
  background-color: #37393c;
}

.mini.tall {
  height: 22px;
  border: 1px solid #505356;
  border-radius: 2px;
}

.zoom {
  appearance: none;
  flex: 1;
  width: 50px;
  min-width: 0;
  height: 8px;
  background: linear-gradient(#66696b, #66696b) center / 100% 2px no-repeat;
}

.zoom::-webkit-slider-thumb {
  appearance: none;
  width: 8px;
  height: 8px;
  border-radius: 50%;
  background-color: #fff;
}

.zoom.vertical {
  flex: none;
  writing-mode: vertical-lr;
  direction: rtl;
  width: 8px;
  height: 42px;
  background: linear-gradient(#66696b, #66696b) center / 2px 100% no-repeat;
}

.zoom.vertical.long { height: 54px; }

.vbar {
  display: flex;
  flex-direction: column;
  gap: 3px;
  width: 12px;
  margin-left: 3px;
  padding-bottom: 12px;
  color: #fff;
}

.vbox {
  display: flex;
  flex-direction: column;
  align-items: center;
  gap: 5px;
  padding: 3px 0;
  background-color: #323538;
}

.vscroll {
  flex: 1;
  background-color: #434547;
}

.vthumb {
  flex: none;
  width: 8px;
  height: 130px;
  margin: auto 0 2px;
  border-radius: 2px;
  background-color: #f2f3f3;
}

/* mixer */
.mixer {
  padding: 0 7px 6px;
  border: 2px solid #4d5052;
  border-radius: 8px 8px 8px 0;
  background-color: #24282b;
}

.mixer-head {
  display: flex;
  align-items: center;
  height: 37px;
  padding-top: 2px;
  border-bottom: 1px solid #5c5f61;
}

.mixer-tools {
  display: flex;
  flex: 1;
  justify-content: center;
  gap: 5px;
}

.mixer-tools .group button { min-width: 24px; }

.mixer-side {
  display: flex;
  gap: 6px;
}

.mixer-side .group button { min-width: 23px; }

.qlink {
  width: 61px;
  font-size: 13px;
}

.count {
  width: 38px;
  height: 23px;
  background-color: #191b1d;
  line-height: 23px;
  text-align: center;
}

.group button.deep { background-color: #191b1d; }

.mixer-body {
  display: flex;
  gap: 2px;
  padding-top: 4px;
}

.console {
  position: relative;
  display: flex;
  flex: 1;
  min-width: 0;
}

/* divider between the racks and the fader section */
.console::after {
  content: "";
  position: absolute;
  top: 74px;
  left: 0;
  right: 0;
  height: 2px;
  background-color: #7c7e80;
}

.divider-grip {
  position: absolute;
  z-index: 1;
  top: 74px;
  left: 812px;
  width: 24px;
  border-top: 2px dashed #fff;
}

.console-scroll {
  display: flex;
  flex-direction: column;
  align-items: center;
  width: 12px;
  padding: 4px 0;
  background-color: #434547;
  color: #e8e8e8;
}

.console-scroll .vthumb {
  height: 102px;
  margin-bottom: 82px;
}

.mixer-hscroll {
  display: flex;
  align-items: center;
  justify-content: space-between;
  height: 12px;
  margin: 2px 14px 0 0;
  padding: 0 4px;
  background-color: #434547;
  color: #6d6f71;
}

.channel {
  display: flex;
  flex: none;
  flex-direction: column;
  width: 91px;
  border-right: 1px solid #07080a;
  color: #b4b6b8;
}

.channel.input { margin-right: 14px; }

.channel.output {
  margin-left: auto;
  margin-right: 17px;
  width: 92px;
  border-left: 1px solid #07080a;
}

.racks {
  height: 74px;
  overflow: hidden;
}

.inserts {
  display: flex;
  flex-direction: column;
  gap: 4px;
  height: 52px;
  padding: 0 3px 0 2px;
  border-bottom: 1px solid #07080a;
}

.slot {
  height: 17px;
  border: 1px solid #131517;
  border-radius: 2px;
  padding-left: 3px;
  line-height: 15px;
  white-space: nowrap;
}

.slot.filled {
  background-color: #216f87;
  border-color: #216f87;
  color: #d9e5e9;
}

.sends {
  display: flex;
  justify-content: space-between;
  height: 22px;
  margin: 8px 2px 0;
  padding: 2px 2px 0 4px;
  background-color: #55585a;
  font-weight: 600;
  line-height: 17px;
}

.sends .icon {
  width: 13px;
  height: 13px;
}

.strip {
  display: flex;
  flex-direction: column;
  padding: 5px 3px 3px 3px;
}

.four {
  display: grid;
  grid-template-columns: 1fr 1fr;
  grid-template-rows: 1fr 1fr;
  gap: 1px;
  height: 38px;
  border: 1px solid #131517;
  background-color: #131517;
}

.four button {
  display: flex;
  align-items: center;
  justify-content: center;
  background-color: #2c2f32;
  font-family: Roboto, sans-serif;
  font-size: 13px;
  font-weight: 700;
}

.four .icon { width: 13px; height: 13px; }
.four .icon.rec { width: 10px; height: 10px; }

.pan {
  position: relative;
  height: 17px;
  margin: 6px 0 8px;
  border-radius: 4px;
  background-color: #191b1c;
  color: #eee;
  font-size: 10px;
  font-weight: 600;
  line-height: 20px;
  text-align: center;
}

.pan-mark,
.pan-bar {
  position: absolute;
  top: 2px;
  left: 50%;
  width: 4px;
  height: 2px;
  margin-left: -2px;
  background-color: #fff;
}

.pan-bar {
  width: 28px;
  margin-left: 0;
  background-color: #2a739d;
}

.pan.left .pan-bar { margin-left: -28px; }
.pan.left .pan-mark { margin-left: -28px; }
.pan.right .pan-mark { margin-left: 24px; }

.faders {
  display: flex;
  gap: 5px;
  height: 79px;
}

.fader,
.meter {
  position: relative;
  flex: 1;
  border-radius: 5px;
  background-color: #1b1c1d;
}

.meter::after {
  content: "";
  position: absolute;
  top: 13px;
  left: 3px;
  right: 3px;
  height: 1px;
  background-color: #46484a;
}

.fader svg {
  position: absolute;
  left: 11px;
  top: 0;
  width: 18px;
  height: 79px;
  stroke: #6a6c6e;
}

.fader input {
  position: absolute;
  left: 3px;
  top: -1px;
  appearance: none;
  writing-mode: vertical-lr;
  direction: rtl;
  width: 10px;
  height: 79px;
  background: linear-gradient(#000, #000) center / 2px 74px no-repeat;
}

.fader input::-webkit-slider-thumb {
  appearance: none;
  width: 10px;
  height: 23px;
  background: linear-gradient(#dcd98a 0 10px, #f4f3c3 10px 11px, #555 11px 12px, #f0efb6 12px 20px, #c5bd38 20px);
}

.fader input.red::-webkit-slider-thumb {
  background: linear-gradient(#c92020 0 3px, #e25a58 3px 11px, #7c1515 11px 12px, #ee7876 12px 20px, #a01212 20px);
}

.fader input.green::-webkit-slider-thumb {
  background: linear-gradient(#52dd52 0 4px, #9af39a 4px 11px, #2e7c2e 11px 12px, #a8f5a8 12px 20px, #35cc35 20px);
}

.scale {
  position: absolute;
  top: 1px;
  right: 1px;
  font-size: 9px;
  line-height: 13px;
  color: #a4a6a8;
  text-align: right;
}

.scale i {
  display: block;
  font-style: normal;
}

.scale i:last-child { margin-top: 22px; }

.levels {
  display: grid;
  grid-template-columns: 1fr 1fr;
  height: 19px;
  margin: 6px 0 5px;
  border: 1px solid #131517;
  font-size: 11px;
  line-height: 16px;
  text-align: center;
}

.levels output:last-child { background-color: #3a3d40; }

.channel-info {
  display: flex;
  align-items: center;
  gap: 4px;
  height: 23px;
  padding: 0 11px 2px 4px;
  border-top: 2px solid #d9dcec;
  font-size: 13px;
}

.channel.input .channel-info { border-color: transparent; }

.channel-info span { margin-left: auto; }

.channel-info .icon { height: 12px; }

.channel-info .icon.inst {
  height: 15px;
  padding: 2px 1px;
  background-color: #17191b;
}

.channel.selected .channel-info .icon.inst { background-color: #808284; }

.channel-name {
  display: flex;
  align-items: center;
  height: 34px;
  padding: 0 3px 6px 4px;
  background-color: #727577;
  color: #eceded;
  font-size: 13px;
  line-height: 14px;
}

.channel-name.long { font-size: 11px; }

.channel-name.small {
  font-size: 10px;
  white-space: nowrap;
}

.channel.selected {
  background-color: #9fa0a2;
  color: #1c1e20;
}

.channel.selected .slot {
  background-color: #7a7d7f;
  border-color: #66696b;
}

.channel.selected .slot.filled {
  background-color: #4890ac;
  border-color: #4890ac;
}

.channel.selected .sends { background-color: #7a7d7f; }

.channel.selected .four,
.channel.selected .levels {
  border-color: #5d6062;
}

.channel.selected .four { background-color: #6b6e70; }
.channel.selected .four button { background-color: #929496; }

.channel.selected .four button.armed {
  background-color: #e03434;
  color: #4c0808;
}

.channel.selected .pan,
.channel.selected .fader,
.channel.selected .meter { background-color: #363738; }
.channel.selected .levels output:last-child { background-color: #8b8d8f; }

.channel.selected .channel-name {
  border-bottom: 6px solid #727577;
  padding-bottom: 0;
  background-color: #ededed;
  color: #222;
}

.channel.output .channel-info {
  border-color: #f00;
  background-color: #f00;
  color: #ffb4b4;
}

/* lower tabs */
.lower-tabs {
  display: flex;
  height: 25px;
  color: #e6e6e6;
}

.tab {
  height: 23px;
  padding: 0 18px;
  font-weight: 600;
}

.tab.ja { font-size: 10px; }

.tab-close {
  width: 21px;
  height: 23px;
}

.tab.active {
  width: 107px;
  margin-top: -2px;
  padding: 5px 0 0;
  border: 2px solid #4d5052;
  border-top: none;
  border-radius: 0 0 4px 4px;
  background-color: #24282b;
  color: #fff;
}

/* media rack */
.media {
  display: flex;
  flex-direction: column;
  width: 230px;
  padding-bottom: 5px;
}

.media-tabs {
  display: flex;
  height: 22px;
  padding-left: 1px;
  color: #e8e8e8;
  font-weight: 600;
}

.media-tabs button {
  width: 68px;
  height: 24px;
}

.media-tabs .active {
  position: relative;
  width: 83px;
  border: 2px solid #4d5052;
  border-bottom: none;
  border-radius: 4px 4px 0 0;
  background-color: #24282b;
}

.media-panel {
  flex: 1;
  padding: 7px;
  border: 2px solid #4d5052;
  border-radius: 8px;
  background-color: #24282b;
}

.media-search {
  display: flex;
  gap: 4px;
}

.search {
  display: flex;
  flex: 1;
  align-items: center;
  gap: 4px;
  height: 20px;
  padding: 0 3px;
  border: 1px solid #54575a;
  border-radius: 2px;
  background-color: #14171a;
}

.search input {
  width: 100%;
  font-style: italic;
}

.search .icon { width: 12px; }

.media-search button {
  width: 25px;
  height: 20px;
  border-radius: 2px;
  background-color: #45484b;
}

.media-search button .icon,
.media-nav .icon {
  display: block;
  margin: 0 auto;
}

.media-nav {
  display: flex;
  height: 31px;
  padding-top: 6px;
  border-bottom: 1px solid #77797b;
  color: #e8e8e8;
}

.media-nav button {
  width: 20px;
  height: 20px;
  margin-right: 3px;
}

.media-nav .back {
  border: 1px solid #2e3235;
  color: #5d6062;
}

.tiles {
  display: grid;
  grid-template-columns: 108px 108px;
  grid-auto-rows: 124px;
  justify-content: center;
  padding: 37px 4px 0 0;
}

.tile {
  display: flex;
  flex-direction: column;
  align-items: center;
  gap: 12px;
  color: #eee;
  white-space: nowrap;
}

.tile-pic {
  display: flex;
  align-items: center;
  justify-content: center;
  width: 70px;
  height: 70px;
  border-radius: 2px;
  background-color: #a9abad;
  color: #25292c;
}

.tile-pic svg {
  width: 50px;
  height: 44px;
  fill: currentColor;
}

.tile-pic.fx {
  font-family: Roboto, sans-serif;
  font-size: 40px;
  font-weight: 700;
}

/* transport */
.transport {
  display: flex;
  align-items: center;
  justify-content: space-between;
  height: 40px;
  padding: 0 9px 1px 4px;
}

.t-group {
  display: flex;
  align-items: center;
  gap: 5px;
}

.t-group.center { padding-left: 8px; }

.dots {
  position: relative;
  margin-right: 7px;
}

.dots::after {
  content: "";
  position: absolute;
  right: -6px;
  top: 6px;
  height: 12px;
  border-right: 2px dotted #c6c8ca;
}

.midirec {
  width: 212px;
  padding-left: 5px;
}

.midirec .icon:first-child { width: 15px; height: 15px; }

.midirec .drop {
  height: 23px;
  padding-right: 7px;
}

.midirec .drop:last-child { border-left: 1px solid #54575a; }

.group .aq {
  width: 36px;
  font-size: 13px;
}

.group .lit { background-color: #3b3d40; }

.locator { width: 149px; }
.locator.first { margin-right: 5px; }

.locator output,
.position output {
  flex: 1;
  padding-right: 6px;
  font-size: 14px;
  text-align: right;
}

.play-controls {
  display: grid;
  grid-template-columns: repeat(2, 38px) repeat(4, 49px);
  height: 32px;
  border: 2px solid #c0c2c4;
  border-radius: 3px;
  background-color: #68696b;
  color: #e2e3e4;
}

.play-controls button {
  display: flex;
  align-items: center;
  justify-content: center;
}

.play-controls .current {
  background-color: #a9acaf;
  color: #1c1e20;
}

.jog { margin-left: 6px; }
.jog button { width: 36px; }

.position { width: 150px; }

.position button { border-right: 1px solid #54575a; }

.tempo { width: 232px; }

.tempo output {
  padding-left: 11px;
  font-size: 13px;
}

.tempo .icon { margin-left: auto; }
.tempo button .icon { margin: 0; }

.tempo .sign {
  height: 23px;
  margin-left: 6px;
  padding: 0 14px;
  border-left: 1px solid #54575a;
  line-height: 23px;
}

.group .tap {
  width: 50px;
  background-color: #3b3d40;
  font-size: 13px;
}

.level {
  width: 88px;
  margin-right: 0;
}

.level-in {
  width: 26px;
  height: 23px;
  border-right: 1px solid #54575a;
}

.level-clip {
  width: 4px;
  height: 21px;
  margin-left: auto;
  margin-right: 3px;
  background-color: #f00;
}
```

FILE: script.js
```js
const BAR = 15.65;      // pixels per bar at this zoom
const ORIGIN = 7;       // x of bar 1
const RANGE_END = 60;
const PLAYHEAD = 24;

const icon = (id, cls = "") => `<svg class="icon ${cls}"><use href="#i-${id}"/></svg>`;
const barX = bar => Math.round(ORIGIN + (bar - 1) * BAR);

// [start, end] in bars
const intro = [[2, 6], [6, 10], [10, 12]];
const verse = [[13, 17], [17, 21], [21, 25], [25, 29]];
const chorus = [[31, 35], [35, 37], [37, 39], [39, 41], [41, 43], [43, 45], [45, 47], [47, 49]];
const outro = [[49, 53], [53, 57], [57, 59]];

// the first track is scrolled almost out of view, so it has no visible title
const tracks = [
  { name: "", kind: "keys", top: -33, clips: [...intro, ...verse, [29, 31], ...chorus, ...outro] },
  { name: "Pop Kit 3", kind: "drums", top: 13, clips: [...intro, [12, 13], ...verse, [29, 30], ...chorus, ...outro] },
  { name: "AGML2 01", kind: "guitar", top: 59, clips: [...intro, ...verse, [29, 31], ...chorus, ...outro] },
  { name: "ABPL2 01", kind: "bass", top: 105, clips: [...intro, ...verse, ...chorus, ...outro] },
  { name: "ABPL2 01 (D)", kind: "lead", top: 151, clips: [...intro, ...outro] },
  { name: "Piapro Studio VSTi 01", top: 197, clips: [], selected: true },
  { name: "Piapro Studio NT2 01", top: 243, clips: [] }
];

const channels = [
  { name: "Stereo In", no: 1, type: "input", fader: 45, color: "red", db: "0.00", peak: "-oo" },
  { name: "HALion Sonic 01", no: 1, fader: 52, db: "3.71", peak: "6.1", insert: "RoomWor...SE", size: "small", rec: true },
  { name: "Pop Kit 3", no: 2, fader: 50, db: "2.79", peak: "-1.3", rec: true },
  { name: "AGML2 01", no: 3, fader: 57, db: "6.02", peak: "2.2", rec: true },
  { name: "ABPL2 01", no: 4, fader: 45, db: "0.00", peak: "-3.5", rec: true },
  { name: "ABPL2 01 (D)", no: 5, fader: 44, db: "-0.38", peak: "4.2", pan: "L69", rec: true },
  { name: "Piapro Studio VSTi 01", no: 6, fader: 57, db: "6.02", peak: "10.1", insert: "RoomWor...SE", size: "long", rec: true, selected: true },
  { name: "Piapro Studio NT2 01", no: 7, fader: 39, db: "-2.27", peak: "5.3", pan: "R69", size: "long", rec: true },
  { name: "HSSE Main", no: 8, fader: 45, color: "green", db: "0.00", peak: "-oo" },
  { name: "Stereo Out", no: 1, type: "output", fader: 25, color: "red", db: "-9.79", peak: "2.8" }
];

const tools = ["arrow", "range", "pencil", "eraser", "scissors", "glue", "cross", "zoom", "line", "speaker", "paint"];

function renderTools() {
  document.getElementById("tools").innerHTML = tools.map((t, i) =>
    `<button class="${i === 0 ? "on" : ""}" aria-label="${t}">${icon(t, "big")}</button>`
  ).join("");
}

function renderTracks() {
  const rows = tracks.map((t, i) => `
    <div class="track ${i === 0 ? "cut" : ""} ${t.selected ? "selected" : ""}">
      <div class="track-no">${i ? icon("keys") + `<span>${i + 1}</span>` : ""}</div>
      <div class="track-color"></div>
      <div class="track-body">
        <div class="pad">${i ? "<button>M</button><button>S</button>" : ""}</div>
        <div class="track-name">${t.name}</div>
        <div class="pads">
          <div class="pad"><button class="${t.selected ? "armed" : ""}" aria-label="録音可能">${icon("dot", "rec")}</button><button aria-label="モニタリング">${icon("speaker")}</button></div>
          <div class="pad"><button aria-label="チャンネル設定">${icon("edit")}</button><button aria-label="インストゥルメント">${icon("keys")}</button></div>
        </div>
      </div>
    </div>`).join("");

  document.getElementById("trackList").innerHTML = rows + `
    <div class="track folder">
      <div class="track-no">${icon("folder")}</div>
      <span class="ja">ラックインストゥルメント</span>
    </div>`;
}

// notes of a part as [x0 %, x1 %, y, height]
function partNotes(kind, start, end) {
  const len = end - start;
  const inVerse = start >= 13 && start < 29;
  const odd = (start - 37) % 4 === 0;

  if (kind === "drums") {
    if (len === 1) return [[4, 14, 6, 3]];
    if (inVerse) return start < 21 ? [] : [[22, 27, 18, 2], [48, 53, 18, 2], [72, 77, 18, 2]];
    const notes = [[0, 100, 26, 4], [len === 4 ? 72 : 40, len === 4 ? 78 : 48, 18, 3]];
    const step = 100 / (len * 4);
    for (let x = 0; x < 99; x += step) {
      notes.push([x, x + step * 0.25, 22, 17], [x + step * 0.35, x + step * 0.75, 31, 4], [x, x + step * 0.6, 36, 3]);
    }
    if (len === 4 && start !== 6 && start !== 53) notes.push([84, 98, 21, 3], [80, 90, 23, 3]);
    return notes;
  }
  if (kind === "guitar" || kind === "keys") {
    if (start === 29) return [[0, 45, 18, 2], [78, 100, 26, 3]];
    if (start === 35) return [[48, 100, 18, 3], [0, 48, 23, 3], [0, 100, 35, 4]];
    if (inVerse) return [[0, 22, 20, 3], [0, 22, 26, 3], [22, 48, 23, 3], [48, 74, 26, 3], [74, 100, 18, 3], [74, 100, 23, 3]];
    if (len === 4) return [[0, 22, 18, 3], [48, 74, 18, 3], [20, 100, 20, 3], [0, 50, 24, 3], [48, 76, 25, 3]];
    return odd ? [[0, 40, 20, 3], [30, 100, 18, 3], [0, 48, 25, 3]] : [[0, 45, 18, 3], [45, 100, 20, 3]];
  }
  if (kind === "bass") {
    if (start === 35) return [[0, 100, 33, 5]];
    if (inVerse) return [[48, 74, 26, 3], [74, 100, 23, 3]];
    if (len === 4) return [[0, 48, 18, 3], [48, 76, 20, 3]];
    return odd ? [[0, 48, 20, 3]] : [[0, 45, 18, 3], [45, 100, 20, 3]];
  }
  if (len === 2) return [[0, 34, 12, 3], [42, 56, 15, 3], [54, 66, 17, 3], [64, 80, 19, 3], [76, 96, 21, 2]];
  return start === 2 || start === 49
    ? [[0, 16, 18, 3], [19, 24, 18, 3], [25, 31, 20, 3], [46, 49, 18, 4], [65, 78, 18, 3], [74, 84, 20, 3], [84, 90, 21, 2], [96, 99, 18, 3]]
    : [[1, 5, 20, 3], [9, 14, 18, 3], [17, 22, 18, 3], [25, 32, 20, 3], [34, 40, 18, 3], [74, 88, 18, 3], [86, 94, 24, 3], [92, 98, 19, 3]];
}

function renderTimeline() {
  const left = barX(1);
  const width = barX(RANGE_END) - left + 1;
  let ruler = `<div class="ruler-range" style="left:${left}px;width:${width}px"></div>`;
  let html = `<div class="canvas-range" style="left:${left}px;width:${width}px"></div>`;

  for (let bar = 1; bar <= 85; bar += 4) {
    const label = bar < 85 ? bar : "";
    ruler += `<div class="tick ${bar < RANGE_END ? "inside" : ""}" style="left:${barX(bar)}px">${label}</div>`;
    html += `<div class="beat" style="left:${barX(bar)}px"></div>`;
  }

  [...tracks.map(t => t.top + 45), 308].forEach(y => {
    html += `<div class="row-line" style="top:${y}px"></div>`;
  });

  // parts start just right of their bar line
  tracks.forEach(t => t.clips.forEach(([start, end]) => {
    const rects = partNotes(t.kind, start, end).map(([a, b, y, h]) =>
      `<rect x="${a}%" y="${y}" width="${b - a}%" height="${h}"/>`).join("");
    const unnamed = end - start === 1 || (t.kind === "lead" && end - start === 2);
    html += `<div class="clip" style="left:${barX(start) + 1}px;top:${t.top + 2}px;width:${barX(end) - barX(start)}px">
      <svg>${rects}</svg><span>${unnamed ? "" : t.name}</span></div>`;
  }));

  document.getElementById("ruler").innerHTML = ruler;
  document.getElementById("canvas").innerHTML = html;
  document.getElementById("playhead").style.left = barX(PLAYHEAD) + 1 + "px";
}

function renderOverview() {
  const x = bar => Math.round(5 + (bar - 2) * 4.4);
  let html = "";
  tracks.forEach((t, i) => t.clips.forEach(([start, end]) => {
    html += `<div class="overview-part" style="left:${x(start)}px;top:${i * 4}px;width:${x(end) - x(start) + 1}px"></div>`;
  }));
  document.getElementById("overview").innerHTML = html;
}

function channelHtml(c) {
  const pan = c.pan || "C";
  const side = pan[0] === "L" ? "left" : pan[0] === "R" ? "right" : "";
  const typeIcon = c.type ? icon(c.type === "input" ? "in" : "out") : icon("keys", "inst");
  return `
  <div class="channel ${c.type || ""} ${c.selected ? "selected" : ""}">
    <div class="racks">
      <div class="inserts">
        <div class="slot ${c.insert ? "filled" : ""}">${c.insert || ""}</div>
        <div class="slot"></div>
      </div>
      <div class="sends"><span>Sends</span>${icon("send")}</div>
    </div>
    <div class="strip">
      <div class="four">
        <button>M</button><button>${c.type === "input" ? "" : "S"}</button>
        <button></button><button aria-label="チャンネル設定">${icon("edit")}</button>
      </div>
      <div class="pan ${side}">${side ? '<span class="pan-bar"></span>' : ""}<span class="pan-mark"></span>${pan}</div>
      <div class="faders">
        <div class="fader">
          <svg><path d="M0 9.500h17M0 22.500h17M0 34.500h17M0 42.500h17M0 49.500h17M0 54.500h17M0 61.500h17M0 70.500h17"/></svg>
          <input type="range" class="${c.color || ""}" min="0" max="57" value="${c.fader}" aria-label="${c.name}">
          <div class="scale"><i>6</i><i>0</i><i>5</i><i>00</i></div>
        </div>
        <div class="meter"></div>
      </div>
      <div class="levels"><output>${c.db}</output><output>${c.peak}</output></div>
      <div class="four">
        <button>R</button><button>W</button>
        <button class="${c.selected ? "armed" : ""}">${c.rec ? icon("dot", "rec") : ""}</button><button>${c.rec ? icon("speaker") : ""}</button>
      </div>
    </div>
    <div class="channel-info">${typeIcon}${icon("stereo")}<span>${c.no}</span></div>
    <div class="channel-name ${c.size || ""}">${c.name}</div>
  </div>`;
}

function renderMixer() {
  document.getElementById("console").innerHTML =
    channels.map(channelHtml).join("") + '<div class="divider-grip"></div>';
}

renderTools();
renderTracks();
renderTimeline();
renderOverview();
renderMixer();
```
